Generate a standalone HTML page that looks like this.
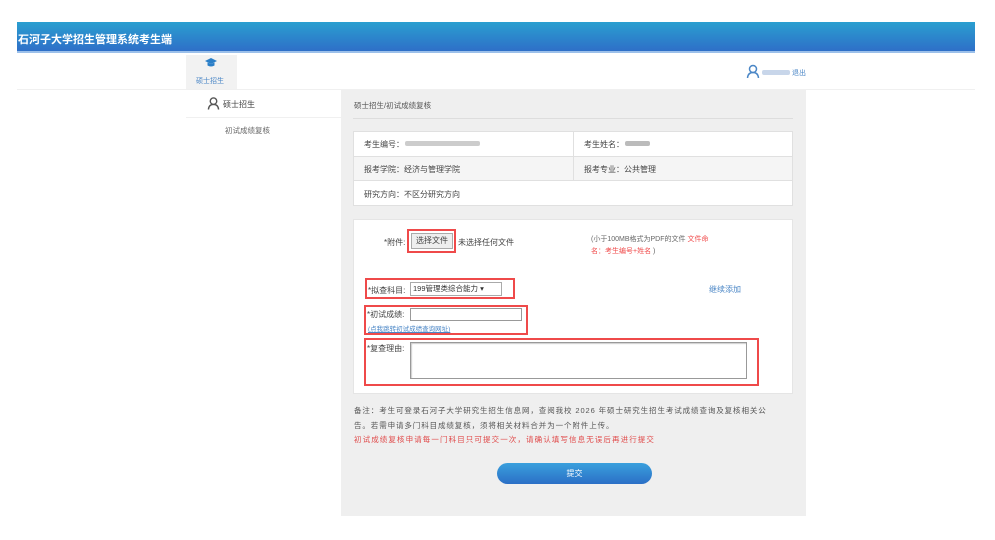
<!DOCTYPE html><html><head><meta charset="utf-8"><style>
*{margin:0;padding:0;box-sizing:border-box}
body{width:995px;height:540px;background:#fff;font-family:"Liberation Sans","Noto Sans CJK SC",sans-serif;font-size:8px;color:#444;position:relative;overflow:hidden}
.a{position:absolute}
.hdr{left:17px;top:22px;width:958px;height:31px;background:linear-gradient(#2a9fd0,#2e6fc8);border-bottom:2px solid #9cc0ea}
.hdr span{position:absolute;left:1px;top:9px;color:#fff;font-weight:bold;font-size:11px}
.red{border:2px solid #ef4a4a}
.cell{position:absolute;font-size:8px;color:#444}
</style></head><body>
<div class="a hdr"><span>石河子大学招生管理系统考生端</span></div>
<div class="a" style="left:186px;top:55px;width:51px;height:34px;background:#f2f2f2"></div>
<svg class="a" style="left:204px;top:57px" width="14" height="12" viewBox="0 0 14 12"><path d="M7 1L13 4L7 7L1 4Z" fill="#2a7fc8"/><path d="M3.5 5.5V8.5Q7 10.5 10.5 8.5V5.5L7 7Z" fill="#2a7fc8"/></svg>
<div class="a" style="left:196px;top:76px;font-size:7px;color:#4a86c6">硕士招生</div>
<div class="a" style="left:17px;top:89px;width:958px;height:1px;background:#f0f0f0"></div>
<svg class="a" style="left:746px;top:64px" width="14" height="14" viewBox="0 0 14 14"><circle cx="7" cy="5" r="3.5" fill="none" stroke="#4a86c6" stroke-width="1.5"/><path d="M1.5 14Q2 8.5 7 8.5Q12 8.5 12.5 14" fill="none" stroke="#4a86c6" stroke-width="1.5"/></svg>
<div class="a" style="left:762px;top:70px;width:28px;height:5px;background:#c8d6ea;border-radius:2px"></div>
<div class="a" style="left:792px;top:68px;font-size:7px;color:#4a86c6">退出</div>
<svg class="a" style="left:207px;top:96px" width="13" height="14" viewBox="0 0 14 14"><circle cx="7" cy="5" r="3.5" fill="none" stroke="#555" stroke-width="1.5"/><path d="M1.5 14Q2 8.5 7 8.5Q12 8.5 12.5 14" fill="none" stroke="#555" stroke-width="1.5"/></svg>
<div class="a" style="left:223px;top:99px;font-size:8px;color:#444">硕士招生</div>
<div class="a" style="left:186px;top:117px;width:155px;height:1px;background:#f0f0f0"></div>
<div class="a" style="left:225px;top:125px;font-size:7.5px;color:#666">初试成绩复核</div>
<div class="a" style="left:341px;top:90px;width:465px;height:426px;background:#efefef"></div>
<div class="a" style="left:354px;top:100px;font-size:7.5px;color:#555">硕士招生/初试成绩复核</div>
<div class="a" style="left:353px;top:118px;width:440px;height:1px;background:#ddd"></div>
<div class="a" style="left:353px;top:131px;width:440px;height:75px;background:#fff;border:1px solid #e0e0e0"></div>
<div class="a" style="left:354px;top:156px;width:438px;height:25px;background:#f5f5f5;border-top:1px solid #e0e0e0;border-bottom:1px solid #e0e0e0"></div>
<div class="a" style="left:573px;top:132px;width:1px;height:49px;background:#e0e0e0"></div>
<div class="cell" style="left:364px;top:139px">考生编号：</div>
<div class="a" style="left:405px;top:141px;width:75px;height:5px;background:#ccc;border-radius:2px"></div>
<div class="cell" style="left:584px;top:139px">考生姓名：</div>
<div class="a" style="left:625px;top:141px;width:25px;height:5px;background:#bbb;border-radius:2px"></div>
<div class="cell" style="left:364px;top:164px">报考学院：经济与管理学院</div>
<div class="cell" style="left:584px;top:164px">报考专业：公共管理</div>
<div class="cell" style="left:364px;top:189px">研究方向：不区分研究方向</div>
<div class="a" style="left:353px;top:219px;width:440px;height:175px;background:#fff;border:1px solid #e5e5e5"></div>
<div class="cell" style="left:384px;top:237px">*附件:</div>
<div class="a red" style="left:407px;top:229px;width:49px;height:24px"></div>
<div class="a" style="left:411px;top:233px;width:42px;height:16px;background:#eee;border:1px solid #aaa;font-size:8px;text-align:center;line-height:14px">选择文件</div>
<div class="cell" style="left:458px;top:237px">未选择任何文件</div>
<div class="cell" style="left:591px;top:234px;font-size:7px;color:#666">(小于100MB格式为PDF的文件 <span style="color:#f04a4a">文件命</span></div>
<div class="cell" style="left:591px;top:246px;font-size:7px;color:#f04a4a">名：考生编号+姓名 <span style="color:#666">)</span></div>
<div class="a red" style="left:365px;top:278px;width:150px;height:21px"></div>
<div class="cell" style="left:368px;top:285px">*拟查科目:</div>
<div class="a" style="left:410px;top:282px;width:92px;height:14px;border:1px solid #aaa;font-size:7.5px;padding-left:2px;line-height:12px;color:#333">199管理类综合能力 ▾</div>
<div class="cell" style="left:709px;top:284px;color:#4a86c6">继续添加</div>
<div class="a red" style="left:364px;top:305px;width:164px;height:30px"></div>
<div class="cell" style="left:367px;top:309px">*初试成绩:</div>
<div class="a" style="left:410px;top:308px;width:112px;height:13px;border:1px solid #999"></div>
<div class="cell" style="left:368px;top:323px;font-size:6.5px;color:#4a86c6;text-decoration:underline">(点我跳转初试成绩查询网址)</div>
<div class="a red" style="left:364px;top:338px;width:395px;height:48px"></div>
<div class="cell" style="left:367px;top:343px">*复查理由:</div>
<div class="a" style="left:410px;top:342px;width:337px;height:37px;border:1px solid #999;box-shadow:inset 1px 1px 1px #ccc"></div>
<div class="cell" style="left:354px;top:403px;font-size:7.5px;color:#555;white-space:nowrap;line-height:15px;letter-spacing:0.9px">备注：考生可登录石河子大学研究生招生信息网，查阅我校 2026 年硕士研究生招生考试成绩查询及复核相关公<br>告。若需申请多门科目成绩复核，须将相关材料合并为一个附件上传。</div>
<div class="cell" style="left:354px;top:434px;font-size:7.5px;color:#e04a4a;letter-spacing:1.1px">初试成绩复核申请每一门科目只可提交一次，请确认填写信息无误后再进行提交</div>
<div class="a" style="left:497px;top:463px;width:155px;height:21px;border-radius:11px;background:linear-gradient(#3aa0dd,#2b6fc6);color:#fff;font-size:8px;text-align:center;line-height:21px">提交</div>
</body></html>
